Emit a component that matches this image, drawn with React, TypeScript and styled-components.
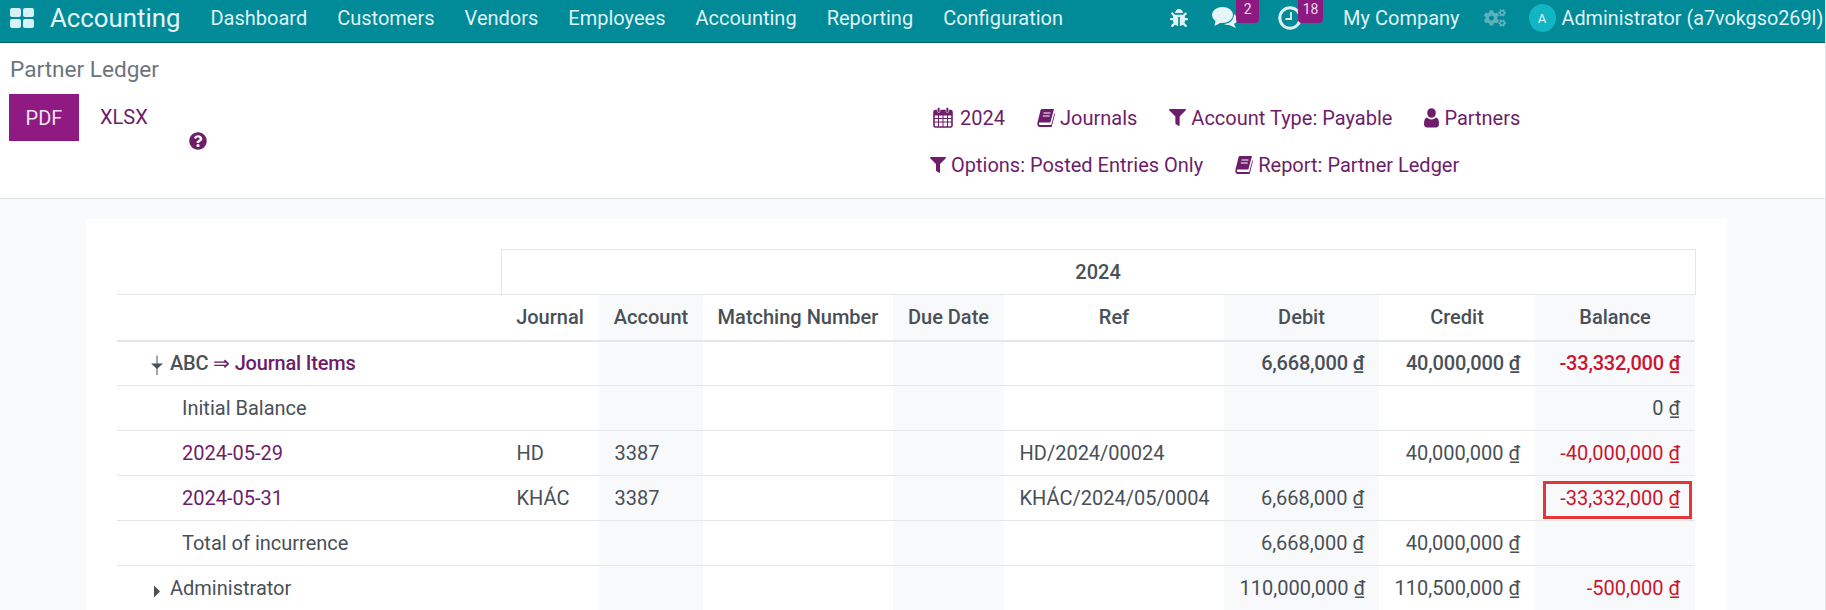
import React from "react";
import styled, { createGlobalStyle } from "styled-components";
import { FaBug, FaCogs, FaFilter, FaQuestionCircle } from "react-icons/fa";

const Global = createGlobalStyle`
  html, body { margin: 0; padding: 0; height: 610px; overflow: hidden; background: #f9fafb; }
  body { font-family: Roboto, "Noto Sans", sans-serif; color: #495057; font-size: 20px; }
  * { box-sizing: border-box; }
`;

const Page = styled.div`
  width: 1826px;
  height: 610px;
  overflow: hidden;
  display: flex;
  flex-direction: column;
  border-right: 1px solid #dfe1e4;
`;

const NavBar = styled.header`
  flex: none;
  height: 43px;
  background: #018a98;
  border-bottom: 1px solid #00606a;
  display: flex;
  align-items: center;
  padding: 0 0 6px 10px;
  color: #dff3f5;
  white-space: nowrap;
  overflow: hidden;
`;
const AppIcon = styled.svg`
  width: 24px;
  height: 20px;
  margin-right: 16px;
  flex: none;
`;
const Brand = styled.span`
  font-size: 25.8px;
  margin-right: 30px;
  color: #e6f6f7;
`;
const Menu = styled.nav`
  display: flex;
  gap: 30px;
`;
const NavLink = styled.span`
  font-size: 20px;
`;
const Systray = styled.div`
  margin-left: 107px;
  display: flex;
  align-items: center;
`;
const TrayIcon = styled.span<{ $w: number; $ml: number }>`
  position: relative;
  display: flex;
  align-items: center;
  justify-content: center;
  width: ${(p) => p.$w}px;
  margin-left: ${(p) => p.$ml}px;
  height: 36px;
  font-size: 18px;
`;
const Badge = styled.span<{ $left: number; $w: number }>`
  position: absolute;
  top: 0;
  left: ${(p) => p.$left}px;
  width: ${(p) => p.$w}px;
  height: 23px;
  background: #8d1a80;
  border-radius: 0 0 4px 4px;
  font-size: 14px;
  text-align: center;
  line-height: 18px;
  color: #ecd9ea;
`;
const Company = styled.span`
  font-size: 20px;
  margin-left: 41px;
`;
const CogIcon = styled.span`
  display: flex;
  font-size: 22px;
  margin-left: 24px;
  color: #5cb1bb;
`;
const Avatar = styled.span`
  width: 27px;
  height: 28px;
  border-radius: 50%;
  background: #12b5c2;
  color: #e6f8f9;
  display: flex;
  align-items: center;
  justify-content: center;
  font-size: 13px;
  margin-left: 23px;
  margin-right: 6px;
`;
const UserName = styled.span`
  font-size: 19.8px;
`;

const ControlPanel = styled.section`
  flex: none;
  height: 156px;
  background: #fff;
  border-bottom: 1px solid #dee2e6;
  padding: 0 0 0 9px;
  display: flex;
  flex-direction: column;
`;
const Title = styled.div`
  font-size: 22.6px;
  color: #6c757d;
  line-height: 26px;
  margin-top: 14px;
  margin-left: 1px;
`;
const PanelBody = styled.div`
  display: flex;
  margin-top: 11px;
`;
const Actions = styled.div`
  position: relative;
  width: 920px;
  flex: none;
  display: flex;
  align-items: flex-start;
`;
const PrimaryBtn = styled.button`
  width: 70px;
  height: 47px;
  border: 0;
  background: #8e1a82;
  color: #f1e0ee;
  font: 400 20px Roboto, sans-serif;
  padding: 0;
`;
const LinkBtn = styled.span`
  color: #6d1d6a;
  font-size: 20px;
  line-height: 47px;
  margin-left: 21px;
`;
const HelpIcon = styled.span`
  color: #6d1d6a;
  font-size: 18px;
  display: flex;
  margin-left: 41px;
  margin-top: 38px;
`;
const Filters = styled.div`
  display: flex;
  flex-direction: column;
  gap: 0;
`;
const FilterRow = styled.div<{ $ml: number }>`
  display: flex;
  height: 47px;
  align-items: center;
  gap: 32px;
  margin-left: ${(p) => p.$ml}px;
`;
const FilterItem = styled.span<{ $gap?: number }>`
  display: inline-flex;
  align-items: center;
  gap: ${(p) => p.$gap ?? 5}px;
  color: #6d1d6a;
  font-size: 20px;
  white-space: nowrap;
  & svg { flex: none; }
`;

const Content = styled.main`
  flex: 1;
  min-height: 0;
  overflow: hidden;
  padding: 20px 98px 0 86px;
`;
const Sheet = styled.div`
  background: #fff;
  height: 100%;
  padding: 30px 32px 0 31px;
`;
const Table = styled.table`
  border-collapse: collapse;
  table-layout: fixed;
  width: 1578px;
  font-size: 20px;
`;
const Row = styled.tr`
  height: 45px;
`;
const HeadRow = styled.tr<{ $h: number }>`
  height: ${(p) => p.$h}px;
`;
const Blank = styled.th`
  border-bottom: 1px solid #e4e7ea;
`;
const YearCell = styled.th`
  border: 1px solid #e4e7ea;
  font-weight: 500;
  text-align: center;
  color: #495057;
`;
const Th = styled.th<{ $alt?: boolean }>`
  font-weight: 500;
  text-align: center;
  padding: 0;
  white-space: nowrap;
  color: #495057;
  border-bottom: 2px solid #e4e7ea;
  background: ${(p) => (p.$alt ? "#f8f9fa" : "#fff")};
`;
const Td = styled.td<{ $alt?: boolean; $right?: boolean; $bold?: boolean; $neg?: boolean; $pad?: number }>`
  position: relative;
  padding: 0 15px 0 ${(p) => p.$pad ?? 15.5}px;
  text-align: ${(p) => (p.$right ? "right" : "left")};
  font-weight: ${(p) => (p.$bold ? 500 : 400)};
  letter-spacing: ${(p) => (p.$bold ? "-0.2px" : "normal")};
  color: ${(p) => (p.$neg ? "#cb1530" : "#495057")};
  white-space: nowrap;
  border-bottom: 1px solid #e4e7ea;
  background: ${(p) => (p.$alt ? "#f8f9fa" : "#fff")};
`;
const PartnerName = styled.div`
  display: flex;
  align-items: center;
`;
const Caret = styled.svg`
  width: 14px;
  height: 24px;
  margin-right: 5px;
  flex: none;
`;
const Link = styled.span`
  color: #6d1d6a;
`;
const Currency = styled.span`
  text-decoration: underline;
`;
const Highlight = styled.span`
  position: absolute;
  left: 8px;
  right: 3px;
  top: 5px;
  bottom: 1px;
  border: 3px solid #e53535;
  pointer-events: none;
`;

const widths = [384, 98, 104, 190, 111, 220, 155, 156, 160];

const Money = ({ v }: { v: string }) => (
  <>
    {v} <Currency>₫</Currency>
  </>
);

const BookIcon = () => (
  <svg width="18" height="20" viewBox="0 0 18 20">
    <path d="M5 1h12l-3.6 13.5H2.2C1.6 15.8 2 17 3 17h11.2l3.3-12 .5 1-3.2 12.4c-.2.4-.5.6-1 .6H3C1 19 0 17 .4 15L3.6 2C3.8 1.4 4.3 1 5 1z" fill="#6d1d6a" />
    <path d="M6.5 5h7M5.8 8h7" stroke="#fff" strokeWidth="1" />
  </svg>
);
const CalendarIcon = () => (
  <svg width="20" height="21" viewBox="0 0 20 21">
    <rect x="1" y="3.5" width="18" height="16.5" rx="1.5" fill="none" stroke="#6d1d6a" strokeWidth="1.6" />
    <path d="M1 8h18M1 11.5h18M1 15h18M5.5 8v12M10 8v12M14.5 8v12" stroke="#6d1d6a" strokeWidth="1" />
    <path d="M1 4h18v4H1z" fill="#6d1d6a" />
    <rect x="4.4" y="0.5" width="2.6" height="5" rx="1.2" fill="#6d1d6a" stroke="#fff" strokeWidth=".6" />
    <rect x="13" y="0.5" width="2.6" height="5" rx="1.2" fill="#6d1d6a" stroke="#fff" strokeWidth=".6" />
  </svg>
);
const UserIcon = () => (
  <svg width="15" height="20" viewBox="0 0 15 20">
    <ellipse cx="7.5" cy="5" rx="4.3" ry="4.8" fill="#6d1d6a" />
    <path d="M3 9.5c1.2 1.2 2.8 1.9 4.5 1.9S10.8 10.7 12 9.5c2 .4 3 2.5 3 6.5 0 2.2-1.2 3.6-3 3.6H3c-1.8 0-3-1.4-3-3.6 0-4 1-6.1 3-6.5z" fill="#6d1d6a" />
  </svg>
);
const ClockIcon = () => (
  <svg width="24" height="24" viewBox="0 0 24 24">
    <circle cx="12" cy="12" r="10.2" fill="none" stroke="#dff3f5" strokeWidth="3" />
    <path d="M13 6v7H7.5" fill="none" stroke="#dff3f5" strokeWidth="1.8" />
  </svg>
);
const ChatIcon = () => (
  <svg width="26" height="22" viewBox="0 0 26 22">
    <ellipse cx="10.5" cy="8" rx="10.5" ry="8" fill="#e6f6f7" />
    <path d="M4 12l-1.5 7L10 15z" fill="#e6f6f7" />
    <path d="M22 7c3 2 4 5 3 7-.8 1.6-2.2 2.6-3 3l2 4-7-3c-2 0-3.8-.3-5-1 5.500 0 10-4 10-10z" fill="#e6f6f7" />
  </svg>
);
const CaretDown = () => (
  <Caret viewBox="0 0 14 24">
    <path d="M0 12.500h12L6 18z" fill="#495057" />
    <path d="M6 4.500V24" stroke="#495057" strokeWidth="1" />
  </Caret>
);
const CaretRight = () => (
  <Caret viewBox="0 0 14 24">
    <path d="M3 9.500l6 6-6 6z" fill="#495057" />
  </Caret>
);

export default function App() {
  return (
    <Page>
      <Global />
      <NavBar>
        <AppIcon viewBox="0 0 24 20">
          <rect x="0" y="0" width="11" height="9" rx="2" fill="#d6f1f3" />
          <rect x="13" y="0" width="11" height="9" rx="2" fill="#d6f1f3" />
          <rect x="0" y="11" width="11" height="9" rx="2" fill="#d6f1f3" />
          <rect x="13" y="11" width="11" height="9" rx="2" fill="#d6f1f3" />
        </AppIcon>
        <Brand>Accounting</Brand>
        <Menu>
          {["Dashboard", "Customers", "Vendors", "Employees", "Accounting", "Reporting", "Configuration"].map((m) => (
            <NavLink key={m}>{m}</NavLink>
          ))}
        </Menu>
        <Systray>
          <TrayIcon $w={18} $ml={0}>
            <FaBug />
          </TrayIcon>
          <TrayIcon $w={26} $ml={24}>
            <ChatIcon />
            <Badge $left={24} $w={23}>2</Badge>
          </TrayIcon>
          <TrayIcon $w={24} $ml={40}>
            <ClockIcon />
            <Badge $left={20} $w={25}>18</Badge>
          </TrayIcon>
          <Company>My Company</Company>
          <CogIcon>
            <FaCogs />
          </CogIcon>
          <Avatar>A</Avatar>
          <UserName>Administrator (a7vokgso269l)</UserName>
        </Systray>
      </NavBar>

      <ControlPanel>
        <Title>Partner Ledger</Title>
        <PanelBody>
          <Actions>
            <PrimaryBtn>PDF</PrimaryBtn>
            <LinkBtn>XLSX</LinkBtn>
            <HelpIcon>
              <FaQuestionCircle />
            </HelpIcon>
          </Actions>
          <Filters>
            <FilterRow $ml={4}>
              <FilterItem $gap={7}>
                <CalendarIcon /> <span>2024</span>
              </FilterItem>
              <FilterItem>
                <BookIcon /> Journals
              </FilterItem>
              <FilterItem>
                <FaFilter size={17} /> Account Type: Payable
              </FilterItem>
              <FilterItem>
                <UserIcon /> Partners
              </FilterItem>
            </FilterRow>
            <FilterRow $ml={1}>
              <FilterItem>
                <FaFilter size={16} /> Options: Posted Entries Only
              </FilterItem>
              <FilterItem>
                <BookIcon /> Report: Partner Ledger
              </FilterItem>
            </FilterRow>
          </Filters>
        </PanelBody>
      </ControlPanel>

      <Content>
        <Sheet>
          <Table>
            <colgroup>
              {widths.map((w, i) => (
                <col key={i} style={{ width: w }} />
              ))}
            </colgroup>
            <thead>
              <HeadRow $h={45}>
                <Blank />
                <YearCell colSpan={8}>2024</YearCell>
              </HeadRow>
              <HeadRow $h={46}>
                <Th />
                <Th>Journal</Th>
                <Th $alt>Account</Th>
                <Th>Matching Number</Th>
                <Th $alt>Due Date</Th>
                <Th>Ref</Th>
                <Th $alt>Debit</Th>
                <Th>Credit</Th>
                <Th $alt>Balance</Th>
              </HeadRow>
            </thead>
            <tbody>
              <Row>
                <Td $bold $pad={34}>
                  <PartnerName>
                    <CaretDown />
                    ABC&nbsp;<Link>⇒ Journal Items</Link>
                  </PartnerName>
                </Td>
                <Td />
                <Td $alt />
                <Td />
                <Td $alt />
                <Td />
                <Td $alt $right $bold><Money v="6,668,000" /></Td>
                <Td $right $bold><Money v="40,000,000" /></Td>
                <Td $alt $right $bold $neg><Money v="-33,332,000" /></Td>
              </Row>
              <Row>
                <Td $pad={65}>Initial Balance</Td>
                <Td />
                <Td $alt />
                <Td />
                <Td $alt />
                <Td />
                <Td $alt />
                <Td />
                <Td $alt $right><Money v="0" /></Td>
              </Row>
              <Row>
                <Td $pad={65}><Link>2024-05-29</Link></Td>
                <Td>HD</Td>
                <Td $alt>3387</Td>
                <Td />
                <Td $alt />
                <Td>HD/2024/00024</Td>
                <Td $alt />
                <Td $right><Money v="40,000,000" /></Td>
                <Td $alt $right $neg><Money v="-40,000,000" /></Td>
              </Row>
              <Row>
                <Td $pad={65}><Link>2024-05-31</Link></Td>
                <Td>KHÁC</Td>
                <Td $alt>3387</Td>
                <Td />
                <Td $alt />
                <Td>KHÁC/2024/05/0004</Td>
                <Td $alt $right><Money v="6,668,000" /></Td>
                <Td />
                <Td $alt $right $neg>
                  <Money v="-33,332,000" />
                  <Highlight />
                </Td>
              </Row>
              <Row>
                <Td $pad={65}>Total of incurrence</Td>
                <Td />
                <Td $alt />
                <Td />
                <Td $alt />
                <Td />
                <Td $alt $right><Money v="6,668,000" /></Td>
                <Td $right><Money v="40,000,000" /></Td>
                <Td $alt />
              </Row>
              <Row>
                <Td $pad={34}>
                  <PartnerName>
                    <CaretRight />
                    Administrator
                  </PartnerName>
                </Td>
                <Td />
                <Td $alt />
                <Td />
                <Td $alt />
                <Td />
                <Td $alt $right><Money v="110,000,000" /></Td>
                <Td $right><Money v="110,500,000" /></Td>
                <Td $alt $right $neg><Money v="-500,000" /></Td>
              </Row>
            </tbody>
          </Table>
        </Sheet>
      </Content>
    </Page>
  );
}
